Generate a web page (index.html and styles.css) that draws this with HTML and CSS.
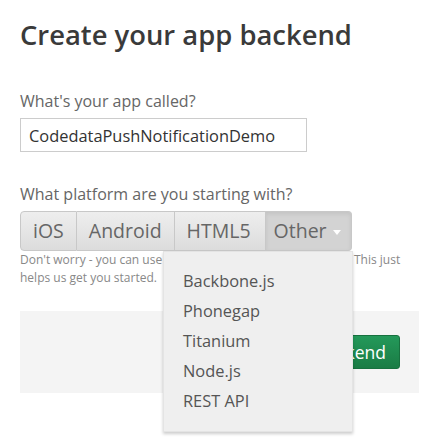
FILE: index.html
```html
<!DOCTYPE html>
<html lang="en">
<head>
    <meta charset="UTF-8">
    <meta name="viewport" content="width=device-width, initial-scale=1.0">
    <title>Create your app backend</title>
    <link rel="stylesheet" href="styles.css">
</head>
<body>
    <div class="wrap">
        <h1 class="title">Create your app backend</h1>

        <label class="label" for="app-name">What's your app called?</label>
        <input class="field" id="app-name" type="text" value="CodedataPushNotificationDemo">

        <div class="label label-platform">What platform are you starting with?</div>
        <div class="btn-group">
            <span class="btn">iOS</span>
            <span class="btn">Android</span>
            <span class="btn">HTML5</span>
            <span class="btn active">Other <i class="caret"></i></span>
            <ul class="menu">
                <li>Backbone.js</li>
                <li>Phonegap</li>
                <li>Titanium</li>
                <li>Node.js</li>
                <li>REST API</li>
            </ul>
        </div>
        <p class="help">Don't worry - you can use Parse with any platform you pick. This just helps us get you started.</p>

        <div class="actions">
            <span class="btn-green">Create backend</span>
        </div>
    </div>
</body>
</html>
```

FILE: styles.css
```css
* {
    margin: 0;
    padding: 0;
    list-style: none;
    box-sizing: border-box;
}
body {
    background: #fff;
    font-family: "Open Sans", "Liberation Sans", sans-serif;
    color: #333;
}
.wrap {
    width: 439px;
    min-height: 444px;
    padding: 20px;
}
.title {
    font-size: 27.4px;
    font-weight: 600;
    line-height: 1.1;
    color: #3a3a3a;
    white-space: nowrap;
}
.label {
    display: block;
    margin-top: 41px;
    font-size: 16px;
    line-height: 20px;
    color: #666;
}
.label-platform {
    margin-top: 32px;
}
.field {
    display: block;
    margin-top: 7px;
    width: 287px;
    height: 34px;
    padding: 0 8px;
    border: 1px solid #ccc;
    font-family: inherit;
    font-size: 16.4px;
    color: #333;
    outline: none;
}
.btn-group {
    position: relative;
    display: flex;
    width: 332px;
    height: 40px;
    margin-top: 7px;
}
.btn {
    height: 40px;
    padding: 0 12px;
    font-size: 19.5px;
    line-height: 38px;
    color: #666;
    background: linear-gradient(#eeeeee, #dcdcdc);
    border: 1px solid #c8c8c8;
    border-left-width: 0;
    white-space: nowrap;
}
.btn:first-child {
    border-left-width: 1px;
    border-radius: 4px 0 0 4px;
}
.btn:nth-child(3) {
    padding-right: 14px;
}
.btn.active {
    flex: 1;
    padding: 0 0 0 8px;
    background: #d3d3d3;
    box-shadow: inset 0 2px 4px rgba(0,0,0,0.08);
    border-radius: 0 4px 4px 0;
}
.caret {
    display: inline-block;
    width: 0;
    height: 0;
    margin-left: 1px;
    vertical-align: middle;
    border-top: 5px solid #fff;
    border-left: 4px solid transparent;
    border-right: 4px solid transparent;
}
.menu {
    position: absolute;
    top: 40px;
    right: -1px;
    width: 190px;
    padding: 14px 0 15px;
    background: #efefef;
    border: 1px solid #e4e4e4;
    box-shadow: 0 2px 3px rgba(0,0,0,0.2);
    z-index: 2;
}
.menu li {
    padding-left: 19px;
    font-size: 16.4px;
    line-height: 30px;
    color: #555;
}
.help {
    width: 385px;
    font-size: 12px;
    line-height: 18px;
    color: #888;
}
.actions {
    display: flex;
    justify-content: flex-end;
    margin-top: 24px;
    padding: 24px 13px 24px 19px;
    background: #f4f4f4;
}
.btn-green {
    height: 34px;
    padding: 0 13px;
    font-size: 17.5px;
    line-height: 32px;
    color: #fff;
    background: linear-gradient(#24995a, #1a7c45);
    border: 1px solid #17713f;
    border-radius: 3px;
    margin-right: 6px;
}
```
